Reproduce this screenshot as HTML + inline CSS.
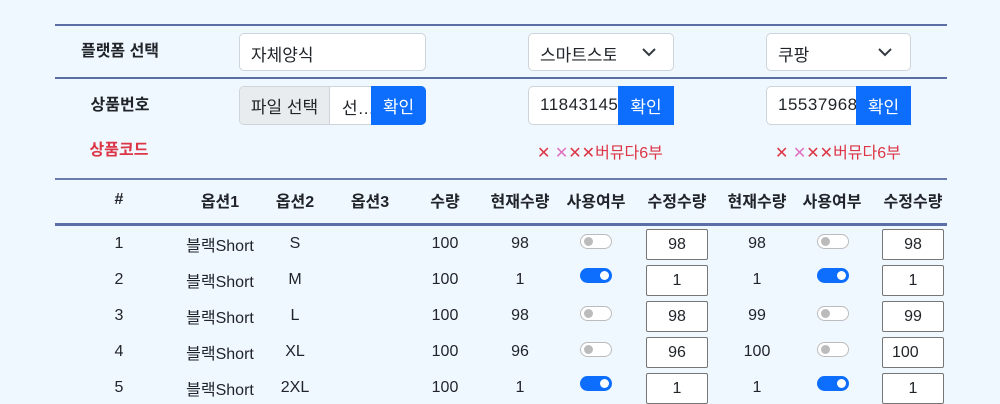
<!DOCTYPE html>
<html><head><meta charset="utf-8">
<style>
*{box-sizing:border-box;margin:0;padding:0}
body{width:1000px;height:400px;overflow:hidden;background:#f0f8ff;font-family:"Liberation Sans","Noto Sans CJK KR",sans-serif;color:#212529;position:relative;font-size:16px}
.a{position:absolute}
.hl{position:absolute;left:55px;width:892px;height:2px;background:#5b6ea5}
.t{position:absolute;transform:translate(-50%,-50%);white-space:nowrap}
.b{font-weight:bold}
.box{position:absolute;background:#fff;border:1px solid #ced4da;border-radius:5px}
.btn{position:absolute;background:#0d6efd;color:#fff;display:flex;align-items:center;justify-content:center;font-size:17px}
.inp{position:absolute;width:62px;height:31px;border:1px solid #767676;border-radius:2px;background:#fff;display:flex;align-items:center;justify-content:center;font-size:16px}
.tg{position:absolute;width:32px;height:15px;border-radius:8px}
.off{border:1px solid #bbb;background:#fff}
.off::after{content:"";position:absolute;left:3px;top:2px;width:9px;height:9px;border-radius:50%;background:#bbb}
.on{background:#0d6efd}
.on::after{content:"";position:absolute;right:3px;top:3px;width:9px;height:9px;border-radius:50%;background:#fff}
.red{color:#dc3545}
</style></head><body>
<div class="hl" style="top:24px"></div>
<div class="hl" style="top:77px"></div>
<div class="hl" style="top:178px;height:2px;opacity:.9"></div>
<div class="hl" style="top:223px;height:3px"></div>

<div class="t b" style="left:120px;top:49px">플랫폼 선택</div>
<div class="box" style="left:239px;top:33px;width:187px;height:38px"><span class="a" style="left:11px;top:7px;font-size:17px">자체양식</span></div>
<div class="box" style="left:528px;top:33px;width:146px;height:38px"><span class="a" style="left:11px;top:7px;font-size:17px;width:76px;overflow:hidden;white-space:nowrap">스마트스토어</span>
<svg class="a" style="left:112px;top:12px" width="16" height="12"><path d="M2 3l6 6 6-6" stroke="#343a40" stroke-width="2" fill="none"/></svg></div>
<div class="box" style="left:766px;top:33px;width:145px;height:38px"><span class="a" style="left:11px;top:7px;font-size:17px">쿠팡</span>
<svg class="a" style="left:110px;top:12px" width="16" height="12"><path d="M2 3l6 6 6-6" stroke="#343a40" stroke-width="2" fill="none"/></svg></div>

<div class="t b" style="left:120px;top:103px">상품번호</div>
<div class="box" style="left:239px;top:86px;width:187px;height:39px;overflow:hidden">
 <div class="a" style="left:0;top:0;width:90px;height:37px;background:#e9ecef;border-right:1px solid #ced4da;display:flex;align-items:center;justify-content:center;font-size:17px">파일 선택</div>
 <span class="a" style="left:102px;top:7px;font-size:17px">선…</span>
</div>
<div class="btn" style="left:371px;top:86px;width:55px;height:39px;border-radius:0 5px 5px 0">확인</div>

<div class="box" style="left:528px;top:86px;width:146px;height:39px"><span class="a" style="left:11px;top:8px;font-size:17px;width:78px;overflow:hidden;white-space:nowrap;letter-spacing:.5px">11843145</span></div>
<div class="btn" style="left:618px;top:86px;width:56px;height:39px">확인</div>
<div class="box" style="left:766px;top:86px;width:145px;height:39px"><span class="a" style="left:11px;top:8px;font-size:17px;width:78px;overflow:hidden;white-space:nowrap;letter-spacing:.5px">15537968</span></div>
<div class="btn" style="left:856px;top:86px;width:55px;height:39px">확인</div>

<div class="t b red" style="left:119px;top:148px">상품코드</div>
<div class="a red" style="left:537px;top:139px;font-size:16px;white-space:nowrap">✕ <span style="color:#e070c0">✕</span>✕✕버뮤다6부</div>
<div class="a red" style="left:775px;top:139px;font-size:16px;white-space:nowrap">✕ <span style="color:#e070c0">✕</span>✕✕버뮤다6부</div>

<div class="t b" style="left:119px;top:200px">#</div>
<div class="t b" style="left:220px;top:200px">옵션1</div>
<div class="t b" style="left:295px;top:200px">옵션2</div>
<div class="t b" style="left:370px;top:200px">옵션3</div>
<div class="t b" style="left:445px;top:200px">수량</div>
<div class="t b" style="left:520px;top:200px">현재수량</div>
<div class="t b" style="left:596px;top:200px">사용여부</div>
<div class="t b" style="left:677px;top:200px">수정수량</div>
<div class="t b" style="left:757px;top:200px">현재수량</div>
<div class="t b" style="left:832px;top:200px">사용여부</div>
<div class="t b" style="left:913px;top:200px">수정수량</div>

<div class="t" style="left:119px;top:244px">1</div><div class="t" style="left:220px;top:244px">블랙Short</div><div class="t" style="left:295px;top:244px">S</div><div class="t" style="left:445px;top:244px">100</div><div class="t" style="left:520px;top:244px">98</div>
<div class="tg off" style="left:580px;top:234px"></div><div class="inp" style="left:646px;top:229px">98</div>
<div class="t" style="left:757px;top:244px">98</div><div class="tg off" style="left:817px;top:234px"></div><div class="inp" style="left:882px;top:229px">98</div>

<div class="t" style="left:119px;top:280px">2</div><div class="t" style="left:220px;top:280px">블랙Short</div><div class="t" style="left:295px;top:280px">M</div><div class="t" style="left:445px;top:280px">100</div><div class="t" style="left:520px;top:280px">1</div>
<div class="tg on" style="left:580px;top:268px"></div><div class="inp" style="left:646px;top:265px">1</div>
<div class="t" style="left:757px;top:280px">1</div><div class="tg on" style="left:817px;top:268px"></div><div class="inp" style="left:882px;top:265px">1</div>

<div class="t" style="left:119px;top:316px">3</div><div class="t" style="left:220px;top:316px">블랙Short</div><div class="t" style="left:295px;top:316px">L</div><div class="t" style="left:445px;top:316px">100</div><div class="t" style="left:520px;top:316px">98</div>
<div class="tg off" style="left:580px;top:306px"></div><div class="inp" style="left:646px;top:301px">98</div>
<div class="t" style="left:757px;top:316px">99</div><div class="tg off" style="left:817px;top:306px"></div><div class="inp" style="left:882px;top:301px">99</div>

<div class="t" style="left:119px;top:352px">4</div><div class="t" style="left:220px;top:352px">블랙Short</div><div class="t" style="left:295px;top:352px">XL</div><div class="t" style="left:445px;top:352px">100</div><div class="t" style="left:520px;top:352px">96</div>
<div class="tg off" style="left:580px;top:342px"></div><div class="inp" style="left:646px;top:337px">96</div>
<div class="t" style="left:757px;top:352px">100</div><div class="tg off" style="left:817px;top:342px"></div><div class="inp" style="left:882px;top:337px;justify-content:flex-start;padding-left:9px">100</div>

<div class="t" style="left:119px;top:388px">5</div><div class="t" style="left:220px;top:388px">블랙Short</div><div class="t" style="left:295px;top:388px">2XL</div><div class="t" style="left:445px;top:388px">100</div><div class="t" style="left:520px;top:388px">1</div>
<div class="tg on" style="left:580px;top:376px"></div><div class="inp" style="left:646px;top:373px">1</div>
<div class="t" style="left:757px;top:388px">1</div><div class="tg on" style="left:817px;top:376px"></div><div class="inp" style="left:882px;top:373px">1</div>
</body></html>
